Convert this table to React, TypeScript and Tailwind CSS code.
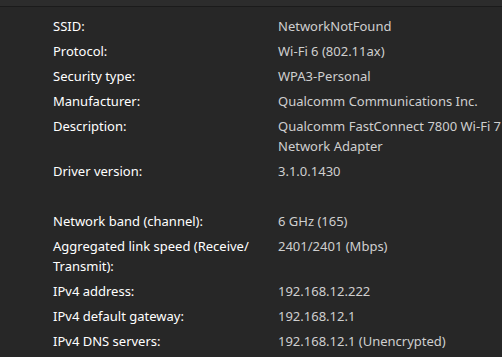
const rows: [string, string][] = [
  ["SSID:", "NetworkNotFound"],
  ["Protocol:", "Wi-Fi 6 (802.11ax)"],
  ["Security type:", "WPA3-Personal"],
  ["Manufacturer:", "Qualcomm Communications Inc."],
  ["Description:", "Qualcomm FastConnect 7800 Wi-Fi 7 Network Adapter"],
  ["Driver version:", "3.1.0.1430"],
  ["", ""],
  ["Network band (channel):", "6 GHz (165)"],
  ["Aggregated link speed (Receive/ Transmit):", "2401/2401 (Mbps)"],
  ["IPv4 address:", "192.168.12.222"],
  ["IPv4 default gateway:", "192.168.12.1"],
  ["IPv4 DNS servers:", "192.168.12.1 (Unencrypted)"],
];

export default function App() {
  return (
    <div className="h-[357px] w-[502px] overflow-hidden bg-[#272727] font-['Noto_Sans',sans-serif] text-[13px] leading-[20px]">
      <div className="h-[6px] bg-[#2c2c2c]" />
      <div className="h-px bg-[#1b1b1b]" />
      <div className="flex flex-col gap-[5px] pl-[53px] pt-[9px]">
        {rows.map(([label, value], i) => (
          <div key={i} className="flex min-h-[20px]">
            <div className="w-[225px] shrink-0 pr-[10px] text-white">{label}</div>
            <div className="w-[240px] shrink-0 text-[#cfcfcf]">{value}</div>
          </div>
        ))}
      </div>
    </div>
  );
}
